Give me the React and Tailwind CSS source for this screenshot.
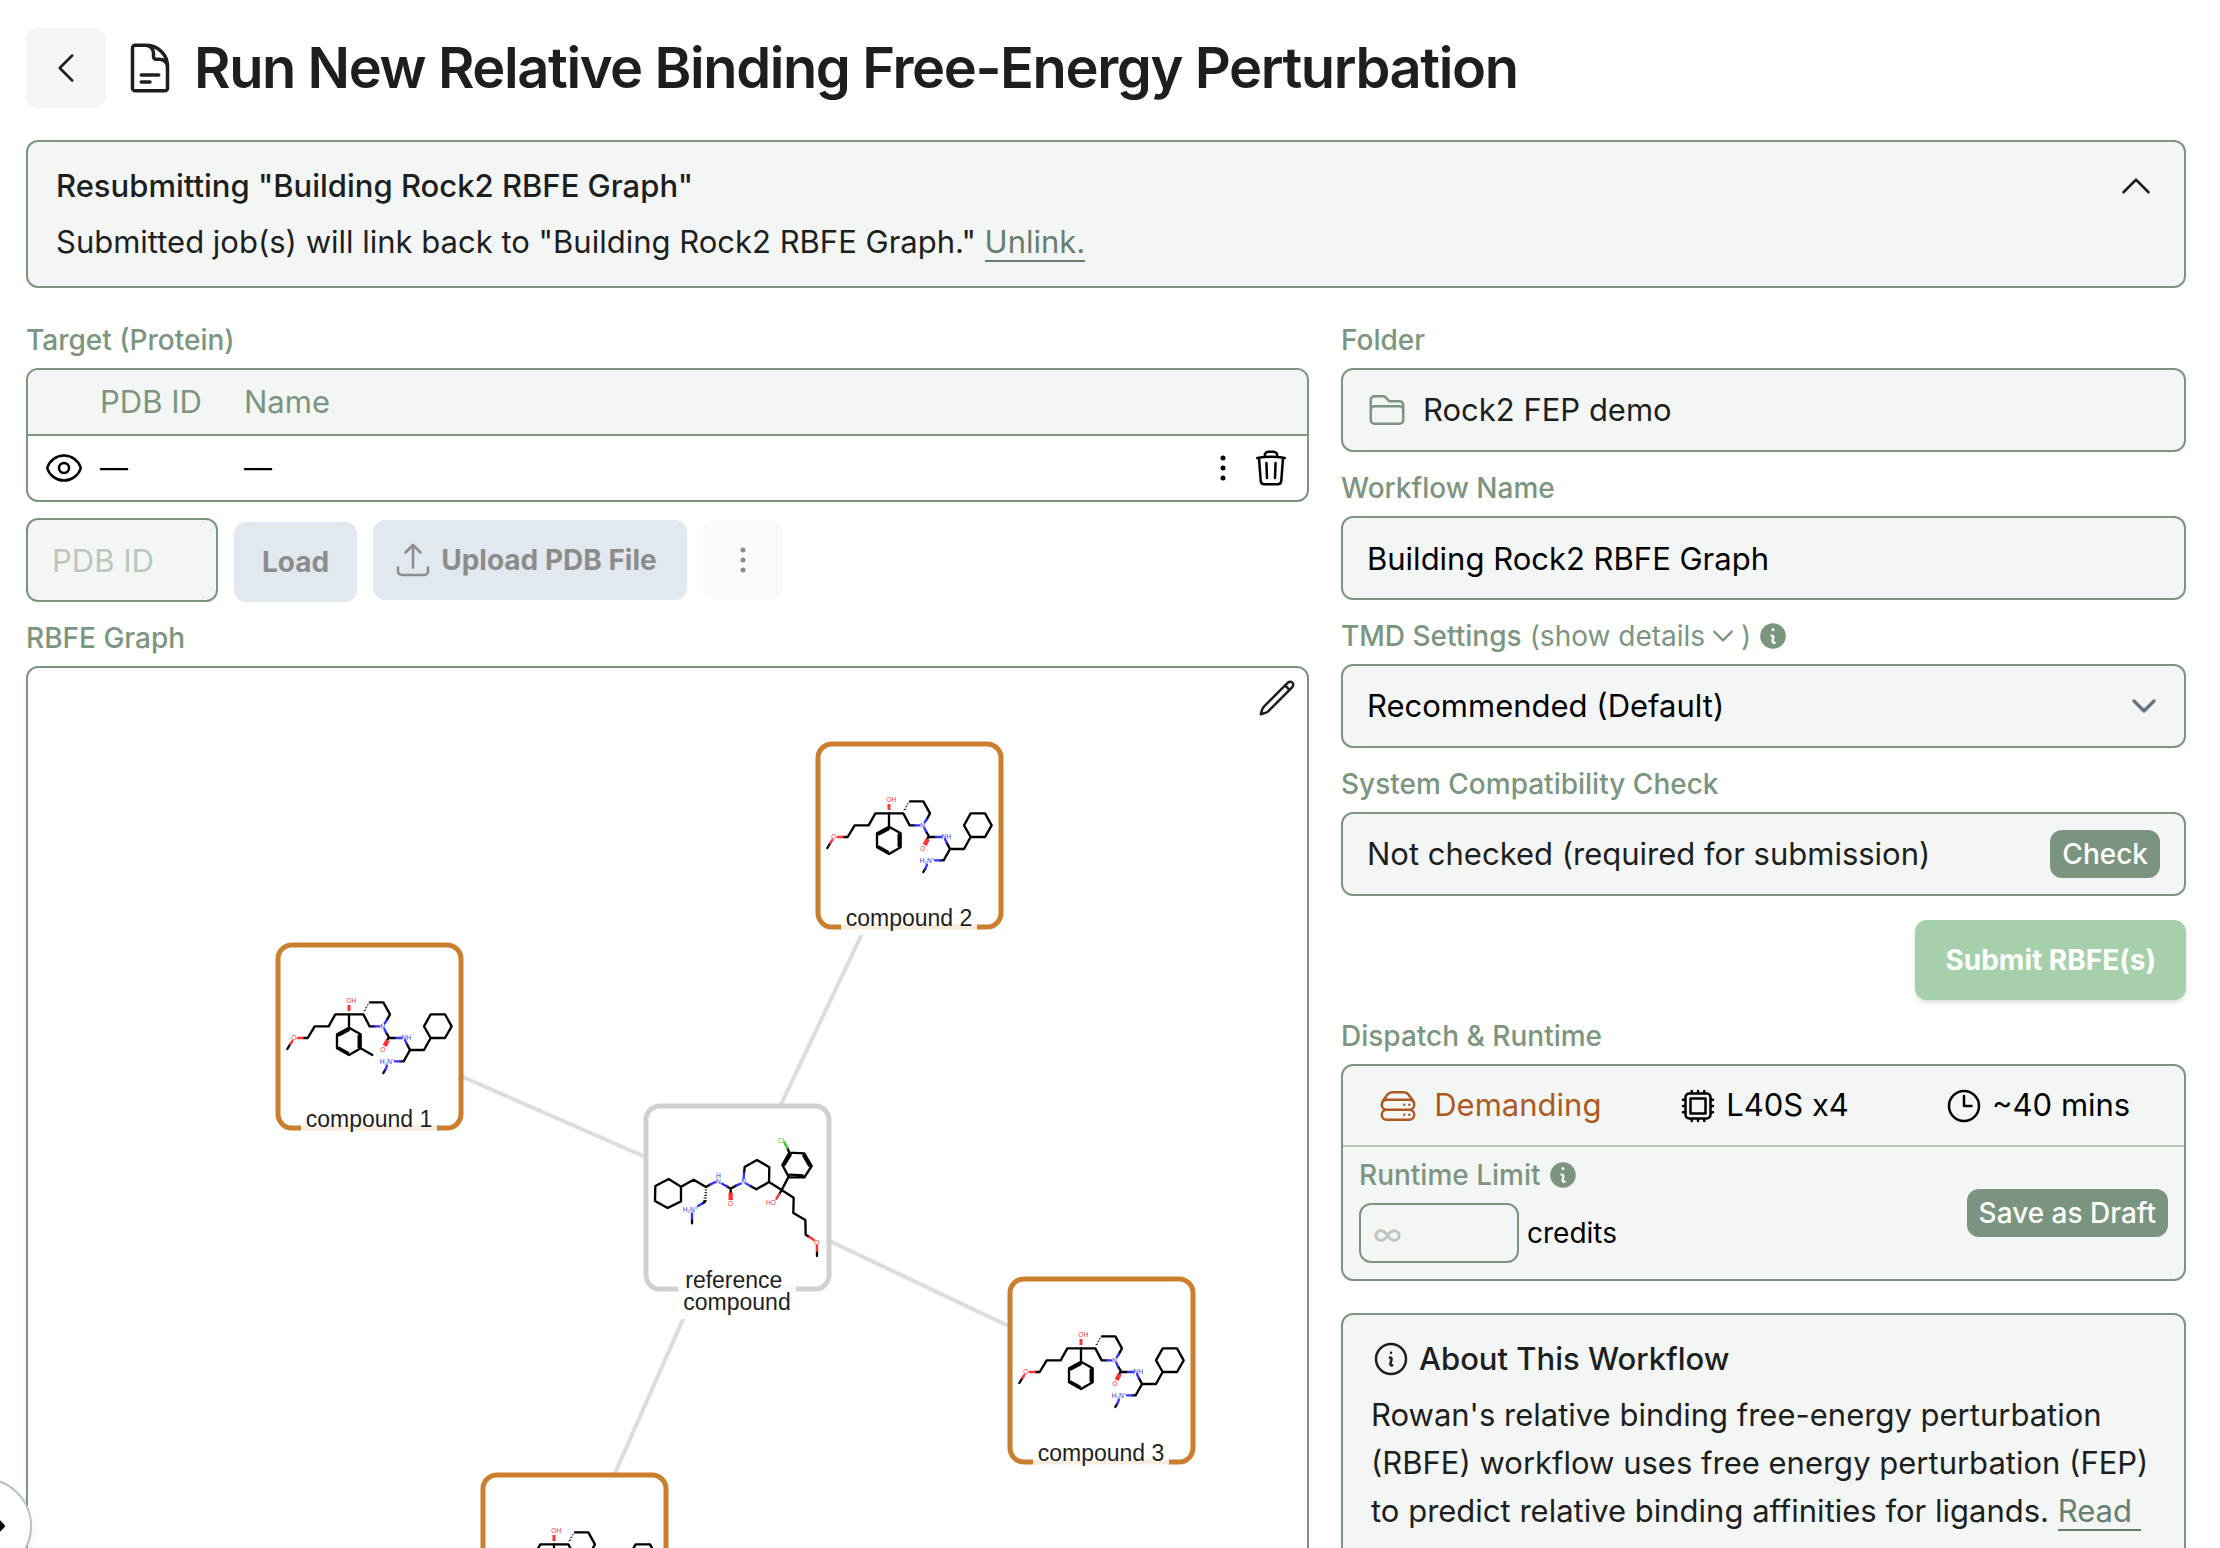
import React, { useState } from 'react';
import {
  HiOutlineArrowUpTray,
  HiOutlineChevronDown,
  HiOutlineChevronLeft,
  HiOutlineChevronRight,
  HiOutlineChevronUp,
  HiOutlineClock,
  HiOutlineCpuChip,
  HiOutlineDocumentText,
  HiOutlineEllipsisVertical,
  HiOutlineEye,
  HiOutlineFolder,
  HiOutlineInformationCircle,
  HiOutlinePencil,
  HiOutlineServerStack,
  HiOutlineTrash,
  HiMiniInformationCircle,
} from 'react-icons/hi2';

const ORANGE = '#cc7e2f';
const GRAY = '#d0d2d1';

// Centers are in canvas units
const nodes = [
  { id: 'c1', x: 341, y: 368, lines: ['compound 1'], methyl: true },
  { id: 'c2', x: 881, y: 167, lines: ['compound 2'] },
  { id: 'c3', x: 1073, y: 702, lines: ['compound 3'] },
  { id: 'c4', x: 546, y: 898, lines: ['compound 4'] },
  { id: 'ref', x: 709, y: 529, lines: ['reference\u00a0', 'compound'], reference: true },
];

const Atom = ({ x, y, color, children }) => (
  <text x={x} y={y} fill={color} fontSize="20" fontFamily="Liberation Sans, sans-serif">
    {children}
  </text>
);

const LigandDrawing = ({ methyl }) => (
  <g fill="none" stroke="#000" strokeWidth="7" strokeLinejoin="round" strokeLinecap="round">
    <path d="M82 384L91 369M128 351H143L164 316H206L226 280H310L329 316H345M380 298L390 280L370 244H330" />
    <path d="M267 280V320L302 340V382L267 402L231 382V340L267 320M296 344V378M264 395L237 380M238 343L266 328" />
    <path d="M378 334L388 351H408M386 350L380 360M440 368L450 387H492L512 351L492 316L512 280H555L575 316L555 351H512" />
    <path d="M450 387L431 421H420M376 446L370 456" />
    <path d="M325 250L322 252M321 258L317 260M317 267L312 269" strokeWidth="3" />
    {methyl && <path d="M302 382L337 402" />}
    <path d="M91 369L97 360M113 351H128" stroke="#f33" />
    <path d="M267 270V252" stroke="#f33" strokeWidth="9" strokeLinecap="butt" />
    <path d="M383 357L374 375" stroke="#f33" strokeWidth="13" strokeLinecap="butt" />
    <path d="M345 316H358M374 307L380 298M373 324L378 334M408 351H424M435 358L440 368M420 421H405M381 434L376 446" stroke="#33f" />
    <g stroke="none">
      <Atom x="259" y="247" color="#f33">OH</Atom>
      <Atom x="94" y="358" color="#f33">O</Atom>
      <Atom x="361" y="393" color="#f33">O</Atom>
      <Atom x="361" y="323" color="#33f">N</Atom>
      <Atom x="424" y="358" color="#33f">NH</Atom>
      <Atom x="359" y="429" color="#33f">H₂N⁺</Atom>
    </g>
  </g>
);

const ReferenceDrawing = () => (
  <g fill="none" stroke="#000" strokeWidth="7" strokeLinejoin="round" strokeLinecap="round">
    <path d="M153 290L116 267L76 288L75 333L113 354L153 334V290L191 269L228 291L242 283M290 289L302 296L320 286M302 296V312" />
    <path d="M342 250L344 231L381 210L418 232L417 276L379 298L360 287M417 276L455 300L491 323L490 369L526 390L527 434L538 441M561 482V498" />
    <path d="M455 300L476 260L457 225L478 188L523 190L545 228L523 262H476M464 224L482 195M520 197L537 227M518 256L480 254M478 188L472 174M455 300L448 312" />
    <path d="M186 386V400M225 335L216 341" />
    <path d="M226 300H230M225 308H230M224 316H230M222 324H229M221 332H230" strokeWidth="3" />
    <path d="M242 283L256 276M276 281L290 289M320 286L332 281M349 281L360 287M341 265L342 250M216 341L204 348M186 370V386" stroke="#33f" />
    <path d="M448 312L439 326M538 441L552 450M561 466V482" stroke="#f33" />
    <path d="M302 308V330" stroke="#f33" strokeWidth="13" strokeLinecap="butt" />
    <path d="M472 174L463 157" stroke="#3c3" />
    <g stroke="none">
      <Atom x="258" y="263" color="#33f">H</Atom>
      <Atom x="258" y="281" color="#33f">N</Atom>
      <Atom x="334" y="283" color="#33f">N</Atom>
      <Atom x="158" y="365" color="#33f">H₂N⁺</Atom>
      <Atom x="294" y="347" color="#f33">O</Atom>
      <Atom x="408" y="345" color="#f33">HO</Atom>
      <Atom x="553" y="464" color="#f33">O</Atom>
      <Atom x="443" y="158" color="#3c3">Cl</Atom>
    </g>
  </g>
);

const GraphNode = ({ node }) => {
  const labelWidth = node.reference ? 118 : 136;
  const labelHeight = node.reference ? 54 : 30;
  const labelTop = node.reference ? 68 : 70;
  return (
    <g>
      <rect
        x={node.x - 91}
        y={node.y - 91}
        width="183"
        height="183"
        rx="14"
        fill="#fff"
        stroke={node.reference ? GRAY : ORANGE}
        strokeWidth="5"
      />
      {node.reference ? (
        <svg x={node.x - 107} y={node.y - 107} width="220" height="220" viewBox="0 0 660 660">
          <ReferenceDrawing />
        </svg>
      ) : (
        <svg x={node.x - 109} y={node.y - 115} width="220" height="220" viewBox="0 0 660 660">
          <LigandDrawing methyl={node.methyl} />
        </svg>
      )}
      <rect
        x={node.x - labelWidth / 2}
        y={node.y + labelTop}
        width={labelWidth}
        height={labelHeight}
        fill="#fff"
        fillOpacity="0.85"
      />
      {node.lines.map((line, i) => (
        <text
          key={line}
          x={node.x}
          y={node.y + 91 + i * 22}
          textAnchor="middle"
          fontSize="23"
          fontFamily="Liberation Sans, sans-serif"
          fill="#1d1f1e"
        >
          {line}
        </text>
      ))}
    </g>
  );
};

const RbfeGraph = () => {
  const center = nodes.find((n) => n.reference);
  return (
    <svg viewBox="0 0 1279 1100" className="block w-full" role="img" aria-label="RBFE graph">
      {nodes
        .filter((n) => !n.reference)
        .map((n) => (
          <line key={n.id} x1={center.x} y1={center.y} x2={n.x} y2={n.y} stroke="#dcdddc" strokeWidth="4" />
        ))}
      {nodes.map((n) => (
        <GraphNode key={n.id} node={n} />
      ))}
    </svg>
  );
};

const fieldBox = 'h-[84px] w-full rounded-xl border-2 border-[#7b957f] bg-[#f4f6f5] text-[31px]';
const labelText = 'block h-10 text-[28px] leading-10 font-medium text-[#7b957f]';

const App = () => {
  const [name, setName] = useState('Building Rock2 RBFE Graph');
  const [pdbId, setPdbId] = useState('');
  const [limit, setLimit] = useState('');

  return (
    <div className="relative h-screen overflow-hidden bg-white pt-7 pr-[34px] pl-[26px] font-['Inter',sans-serif] text-[31px] text-[#1d1f1e]">
      {/* Page title */}
      <header className="flex items-center gap-4">
        <button aria-label="Back" className="flex size-20 items-center justify-center rounded-xl bg-[#f4f6f5]">
          <HiOutlineChevronLeft className="size-10" />
        </button>
        <HiOutlineDocumentText className="size-14" />
        <h1 className="text-[56px] leading-20 font-semibold tracking-tight whitespace-nowrap">
          Run New Relative Binding Free-Energy Perturbation
        </h1>
      </header>

      {/* Resubmission banner */}
      <section className="mt-8 flex items-start justify-between rounded-xl border-2 border-[#7b957f] bg-[#f4f6f5] px-7 py-4">
        <div className="leading-14">
          <h2 className="font-medium">Resubmitting "Building Rock2 RBFE Graph"</h2>
          <p>
            Submitted job(s) will link back to "Building Rock2 RBFE Graph."{' '}
            <a href="#unlink" className="border-b-2 border-[#66806d] text-[#66806d]">Unlink.</a>
          </p>
        </div>
        <button aria-label="Collapse" className="flex h-14 items-center">
          <HiOutlineChevronUp className="size-10" />
        </button>
      </section>

      <div className="mt-8 grid grid-cols-[1283fr_845fr] gap-8">
        {/* Left column */}
        <main className="min-w-0">
          <h3 className={labelText}>Target (Protein)</h3>
          <div className="mt-2 overflow-hidden rounded-xl border-2 border-[#7b957f]">
            <table className="w-full table-fixed text-left">
              <thead>
                <tr className="h-[65px] border-b-2 border-[#7b957f] bg-[#f4f6f5] text-[#7b957f]">
                  <th className="w-[72px]" aria-label="Visibility"></th>
                  <th className="w-36 font-normal">PDB ID</th>
                  <th className="font-normal">Name</th>
                  <th className="w-28" aria-label="Actions"></th>
                </tr>
              </thead>
              <tbody>
                <tr className="h-[65px] text-black">
                  <td className="pl-4">
                    <button aria-label="Toggle visibility" className="block">
                      <HiOutlineEye className="size-10" />
                    </button>
                  </td>
                  <td className="text-[28px]">—</td>
                  <td className="text-[28px]">—</td>
                  <td>
                    <div className="flex gap-2 pl-2">
                      <button aria-label="Protein options">
                        <HiOutlineEllipsisVertical className="size-10" />
                      </button>
                      <button aria-label="Delete protein">
                        <HiOutlineTrash className="size-10" />
                      </button>
                    </div>
                  </td>
                </tr>
              </tbody>
            </table>
          </div>

          <div className="mt-4 flex items-center gap-4 text-[28px] font-bold text-[#8c8c8c]">
            <form className="flex items-end gap-4" onSubmit={(e) => e.preventDefault()}>
              <input
                aria-label="PDB ID"
                placeholder="PDB ID"
                value={pdbId}
                onChange={(e) => setPdbId(e.target.value)}
                className="h-[84px] w-48 rounded-xl border-2 border-[#7b957f] bg-[#f4f6f5] px-6 text-[31px] font-normal text-black placeholder:text-[#b9c7bc]"
              />
              <button className="h-20 rounded-xl bg-[#e2e8ef] px-7">Load</button>
            </form>
            <button className="flex h-20 items-center gap-2 rounded-xl bg-[#e2e8ef] pr-[30px] pl-5">
              <HiOutlineArrowUpTray className="size-10" />
              Upload PDB File
            </button>
            <button aria-label="More options" className="flex size-20 items-center justify-center rounded-xl bg-[#fafafa]">
              <HiOutlineEllipsisVertical className="size-10" />
            </button>
          </div>

          <h3 className={`mt-4 ${labelText}`}>RBFE Graph</h3>
          <div className="relative mt-2 overflow-hidden rounded-xl border-2 border-[#7b957f]">
            <RbfeGraph />
            <button aria-label="Edit graph" className="absolute top-2.5 right-2.5">
              <HiOutlinePencil className="size-10" />
            </button>
          </div>
        </main>

        {/* Right column */}
        <aside className="min-w-0">
          <h3 className={labelText}>Folder</h3>
          <button className={`mt-2 flex items-center gap-4 px-6 ${fieldBox}`}>
            <HiOutlineFolder className="size-10 text-[#7b957f]" />
            Rock2 FEP demo
          </button>

          <label htmlFor="workflow-name" className={`mt-4 ${labelText}`}>Workflow Name</label>
          <input
            id="workflow-name"
            value={name}
            onChange={(e) => setName(e.target.value)}
            className={`mt-2 px-6 text-black ${fieldBox}`}
          />

          <div className="mt-4 flex items-center">
            <label htmlFor="tmd-settings" className={labelText}>TMD Settings</label>
            <button className="ml-2 flex items-center text-[28px] leading-10 text-[#7b957f]">
              (show details
              <HiOutlineChevronDown className="mx-1 size-7" strokeWidth="2" />)
            </button>
            <HiMiniInformationCircle className="ml-1.5 size-8 text-[#7b957f]" />
          </div>
          <div className="relative mt-2">
            <select id="tmd-settings" className={`appearance-none px-6 text-black ${fieldBox}`}>
              <option>Recommended (Default)</option>
            </select>
            <HiOutlineChevronDown className="pointer-events-none absolute top-6.5 right-6.5 size-8 text-[#6b7280]" strokeWidth="2.5" />
          </div>

          <h3 className={`mt-4 ${labelText}`}>System Compatibility Check</h3>
          <div className={`mt-2 flex items-center justify-between px-6 ${fieldBox}`}>
            <span>Not checked (required for submission)</span>
            <button className="h-12 rounded-xl bg-[#7b947f] px-3 text-[28px] font-medium text-white">Check</button>
          </div>

          <div className="mt-6 flex justify-end">
            <button className="h-20 rounded-xl bg-[#a6d0ab] px-[30px] text-[28px] font-bold text-white shadow-md">
              Submit RBFE(s)
            </button>
          </div>

          <h3 className={`mt-4 ${labelText}`}>Dispatch & Runtime</h3>
          <section className="mt-2 rounded-xl border-2 border-[#7b957f] bg-[#f4f6f5] text-black">
            <div className="grid h-[81px] grid-cols-3 items-center border-b-2 border-[#b5c6b9] px-2.5">
              <div className="flex items-center justify-center gap-4 text-[#ad5a22]">
                <HiOutlineServerStack className="size-10" />
                Demanding
              </div>
              <div className="flex items-center justify-center gap-2">
                <HiOutlineCpuChip className="size-10" />
                L40S x4
              </div>
              <div className="flex items-center justify-center gap-2">
                <HiOutlineClock className="size-10" />
                ~40 mins
              </div>
            </div>
            <div className="flex items-center justify-between px-4">
              <div className="pt-2 pb-4">
                <div className="flex items-center gap-1.5">
                  <label htmlFor="runtime-limit" className={labelText}>Runtime Limit</label>
                  <HiMiniInformationCircle className="size-8 text-[#7b957f]" />
                </div>
                <div className="mt-2 flex items-center gap-2 text-[28px]">
                  <input
                    id="runtime-limit"
                    placeholder="∞"
                    value={limit}
                    onChange={(e) => setLimit(e.target.value)}
                    className="h-15 w-40 rounded-xl border-2 border-[#7b957f] bg-transparent px-3 text-[31px] placeholder:text-[#b9c7bc]"
                  />
                  credits
                </div>
              </div>
              <button className="h-12 rounded-xl bg-[#7b947f] px-3 text-[28px] font-medium text-white">
                Save as Draft
              </button>
            </div>
          </section>

          <section className="mt-8 rounded-xl border-2 border-[#7b957f] bg-[#f4f6f5] px-7 pt-5 pb-7">
            <h2 className="flex h-12 items-center gap-2 font-medium">
              <HiOutlineInformationCircle className="size-10" />
              About This Workflow
            </h2>
            <p className="mt-2 leading-12">
              Rowan's relative binding free-energy perturbation (RBFE) workflow uses free energy perturbation (FEP) to
              predict relative binding affinities for ligands.{' '}
              <a href="#docs" className="border-b-2 border-[#66806d] text-[#66806d]">Read&nbsp; more.</a>
            </p>
          </section>
        </aside>
      </div>

      {/* Sidebar handle, half hidden behind the window edge */}
      <button
        aria-label="Open sidebar"
        className="absolute bottom-[-26px] -left-16 flex size-24 items-center justify-end rounded-full border-2 border-[#b5c6b9] bg-white pr-3.5 text-black shadow-lg"
      >
        <HiOutlineChevronRight className="size-10" strokeWidth="3" />
      </button>
    </div>
  );
};

export default App;
